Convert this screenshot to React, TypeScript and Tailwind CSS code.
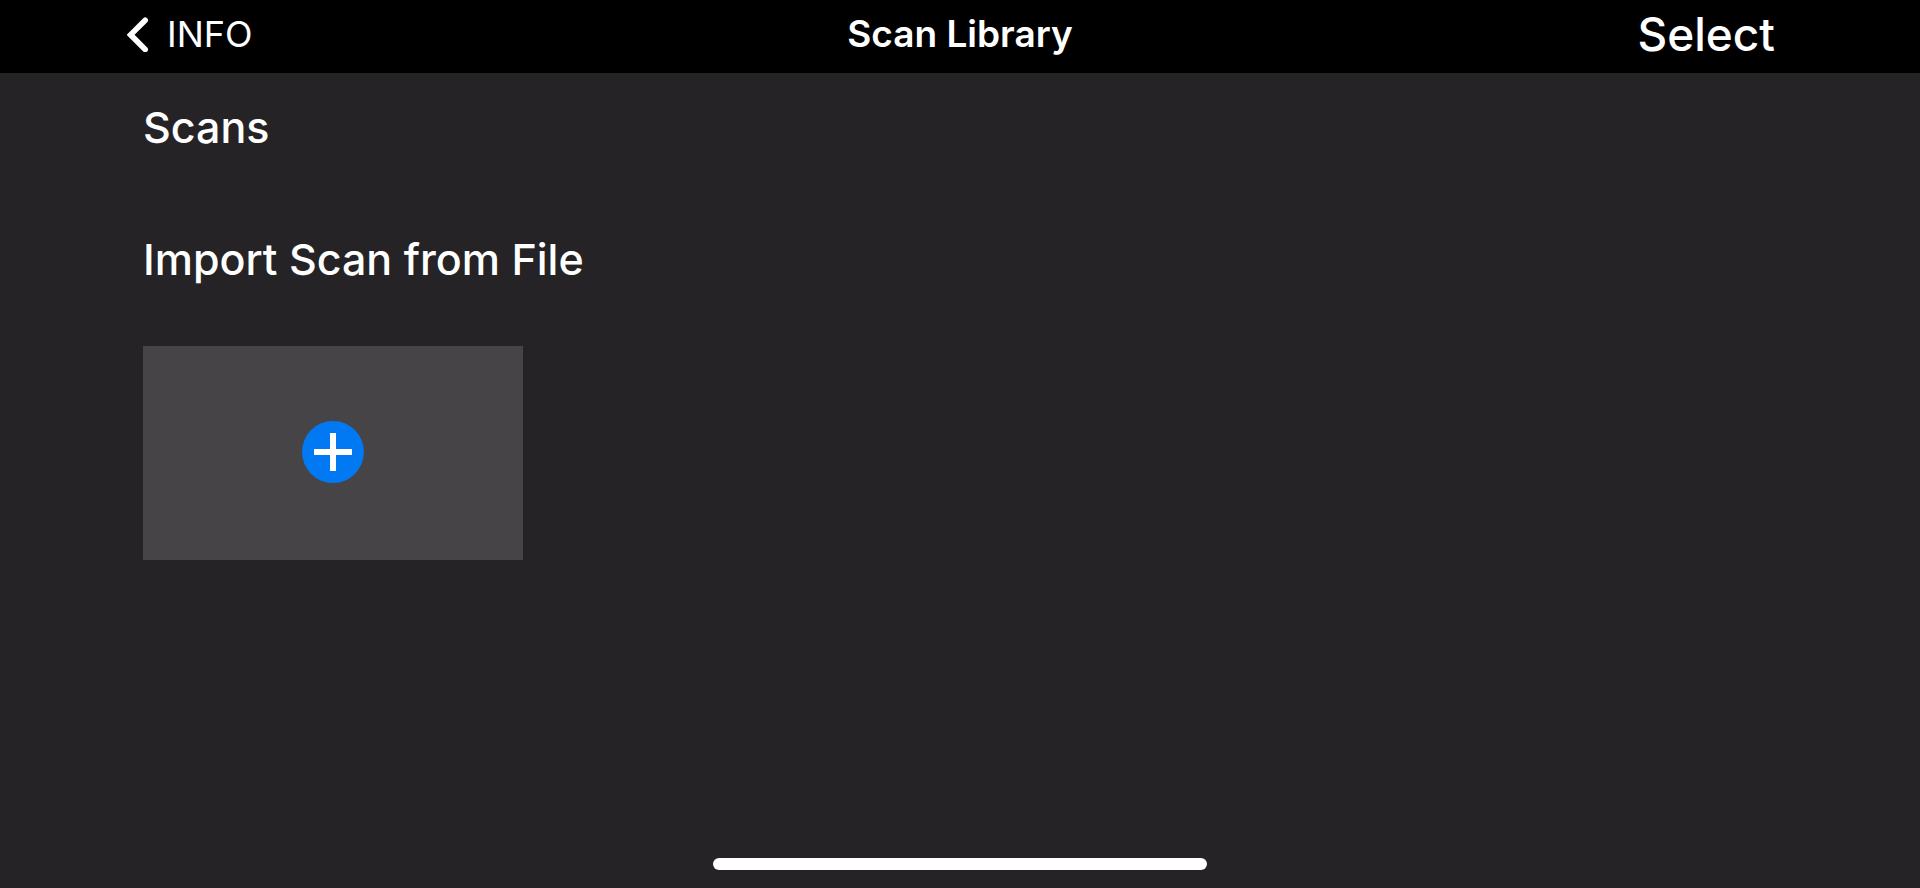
export default function App() {
  return (
    <div className="flex min-h-screen flex-col bg-[#252326] font-['Inter',sans-serif] text-white">
      <header className="grid h-[73px] grid-cols-[1fr_auto_1fr] items-center bg-black px-[127px] pb-1.5">
        <button className="flex items-center gap-4 justify-self-start text-[36px] leading-[44px]">
          <svg
            className="h-9 w-6"
            viewBox="0 0 24 36"
            fill="none"
            stroke="currentColor"
            strokeWidth="5.6"
            strokeLinecap="round"
            aria-hidden="true"
          >
            <path d="M18.2 4.2 3.6 18.8 18.2 33.4" />
          </svg>
          INFO
        </button>
        <h1 className="text-center text-[37px] leading-[44px] font-semibold">Scan Library</h1>
        <button className="mr-[18px] justify-self-end text-[46px] leading-[56px] font-medium">Select</button>
      </header>

      <main className="flex-1 px-[143px] pt-[26px]">
        <h2 className="text-[43px] leading-[56px] font-medium">Scans</h2>
        <h2 className="mt-19 text-[43px] leading-[56px] font-medium">Import Scan from File</h2>
        <button
          aria-label="Import scan"
          className="mt-[59px] flex h-[214px] w-[380px] items-center justify-center bg-[#464446] pb-0.5"
        >
          <svg className="size-[62px]" viewBox="0 0 62 62" aria-hidden="true">
            <circle cx="31" cy="31" r="31" fill="#0079f3" />
            <path d="M31 12v38M12 31h38" stroke="#fff" strokeWidth="6" />
          </svg>
        </button>
      </main>

      <footer className="flex justify-center pb-[18px]">
        <div className="h-3 w-[494px] rounded-full bg-white" />
      </footer>
    </div>
  )
}
